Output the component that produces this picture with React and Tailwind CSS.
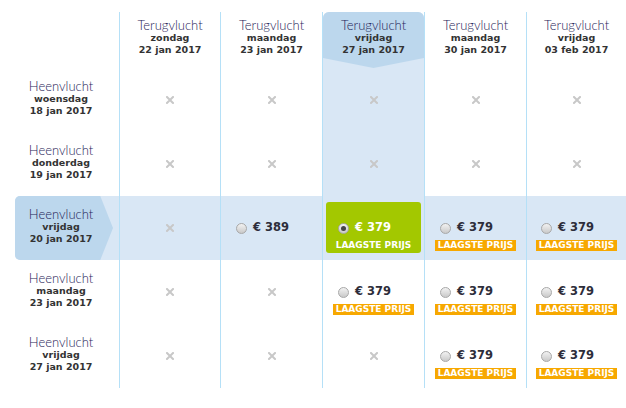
const cols = [
  { day: 'zondag', date: '22 jan 2017', w: 'w-[101px]' },
  { day: 'maandag', date: '23 jan 2017', w: 'w-[102px]' },
  { day: 'vrijdag', date: '27 jan 2017', w: 'w-[102px]', selected: true },
  { day: 'maandag', date: '30 jan 2017', w: 'w-[102px]' },
  { day: 'vrijdag', date: '03 feb 2017', w: 'w-[100px]' },
]

// x = geen vlucht, p = prijs, b = prijs + laagste prijs, s = geselecteerd
const rows = [
  { day: 'woensdag', date: '18 jan 2017', cells: ['x', 'x', 'x', 'x', 'x'] },
  { day: 'donderdag', date: '19 jan 2017', cells: ['x', 'x', 'x', 'x', 'x'] },
  { day: 'vrijdag', date: '20 jan 2017', cells: ['x', 'p389', 's379', 'b379', 'b379'], selected: true },
  { day: 'maandag', date: '23 jan 2017', cells: ['x', 'x', 'b379', 'b379', 'b379'] },
  { day: 'vrijdag', date: '27 jan 2017', cells: ['x', 'x', 'x', 'b379', 'b379'] },
]

const line = 'border-l border-[#b5e0f7]'
const thin = "font-['Lato',sans-serif] font-light text-[13px] leading-[14px] text-[#1f2558]"
const bold = "font-['DejaVu_Sans',Verdana,sans-serif] font-bold text-[9.5px] leading-[11.5px] text-[#333]"
const badge = "font-['DejaVu_Sans',Verdana,sans-serif] font-bold text-[9px] text-white"
const light = 'bg-[#d9e7f5]'
const dark = 'bg-[#bcd7ed]'

function Cross() {
  return (
    <svg width="8" height="8" viewBox="0 0 8 8">
      <path d="M1 1L7 7M7 1L1 7" stroke="#c8c8c8" strokeWidth="2" strokeLinecap="square" />
    </svg>
  )
}

function Radio({ checked }) {
  return (
    <span className="w-[11px] h-[11px] rounded-full border border-[#a8a8a8] bg-gradient-to-b from-[#f2f2f2] to-[#c9c9c9] flex items-center justify-center shrink-0">
      {checked && <span className="w-[5px] h-[5px] rounded-full bg-[#444]" />}
    </span>
  )
}

function Price({ value, checked, white }) {
  return (
    <div className="h-[14px] flex items-center gap-[6px] pr-[18px]">
      <Radio checked={checked} />
      <span className={`font-['DejaVu_Sans',Verdana,sans-serif] font-bold text-[11.5px] ${white ? 'text-white' : 'text-[#2d2d3a]'}`}>
        € {value}
      </span>
    </div>
  )
}

function Cell({ kind }) {
  if (kind === 'x') return <Cross />
  const value = kind.slice(1)
  if (kind[0] === 'p') return <Price value={value} />
  if (kind[0] === 's') {
    return (
      <div className="w-full h-full px-[3px] pt-[6px] pb-[7px]">
        <div className="w-full h-full rounded-[3px] bg-[#a3c800] flex flex-col items-center pt-[19px]">
          <Price value={value} checked white />
          <div className={`mt-[5px] h-[11px] flex items-center ${badge}`}>LAAGSTE PRIJS</div>
        </div>
      </div>
    )
  }
  return (
    <div className="flex flex-col items-center pt-[16px]">
      <Price value={value} />
      <div className={`mt-[5px] h-[11px] px-[3px] bg-[#f7a800] flex items-center ${badge}`}>LAAGSTE PRIJS</div>
    </div>
  )
}

export default function App() {
  return (
    <div className="w-[626px] h-[408px] bg-white pt-[12px] overflow-hidden">
      <div className="flex h-[56px]">
        <div className="w-[119px]" />
        {cols.map((c, i) => (
          <div key={i} className={`${c.w} ${line} h-full`}>
            {c.selected ? (
              <div className={`h-full rounded-t-[6px] ${light}`}>
                <div className={`h-full rounded-t-[6px] ${dark} flex flex-col items-center pt-[6px] [clip-path:polygon(0_0,100%_0,100%_82%,50%_100%,0_82%)]`}>
                  <div className={thin}>Terugvlucht</div>
                  <div className={bold}>{c.day}</div>
                  <div className={bold}>{c.date}</div>
                </div>
              </div>
            ) : (
              <div className="h-full flex flex-col items-center pt-[6px]">
                <div className={thin}>Terugvlucht</div>
                <div className={bold}>{c.day}</div>
                <div className={bold}>{c.date}</div>
              </div>
            )}
          </div>
        ))}
      </div>

      {rows.map((r, ri) => (
        <div key={ri} className="flex h-[64px]">
          <div className="w-[119px] h-full pl-[15px]">
            <div className={`h-full rounded-l-[5px] ${r.selected ? light : ''}`}>
              <div className={`w-[98px] h-full rounded-l-[5px] ${r.selected ? dark : ''} flex flex-col items-center justify-center pr-[6px] pb-[5px] [clip-path:polygon(0_0,87%_0,100%_50%,87%_100%,0_100%)]`}>
                <div className={thin}>Heenvlucht</div>
                <div className={bold}>{r.day}</div>
                <div className={bold}>{r.date}</div>
              </div>
            </div>
          </div>
          {r.cells.map((k, ci) => {
            const c = cols[ci]
            const bg = r.selected || (c.selected && ri < 2) ? light : ''
            return (
              <div key={ci} className={`${c.w} ${line} h-full flex items-center justify-center ${bg}`}>
                <Cell kind={k} />
              </div>
            )
          })}
        </div>
      ))}
    </div>
  )
}
